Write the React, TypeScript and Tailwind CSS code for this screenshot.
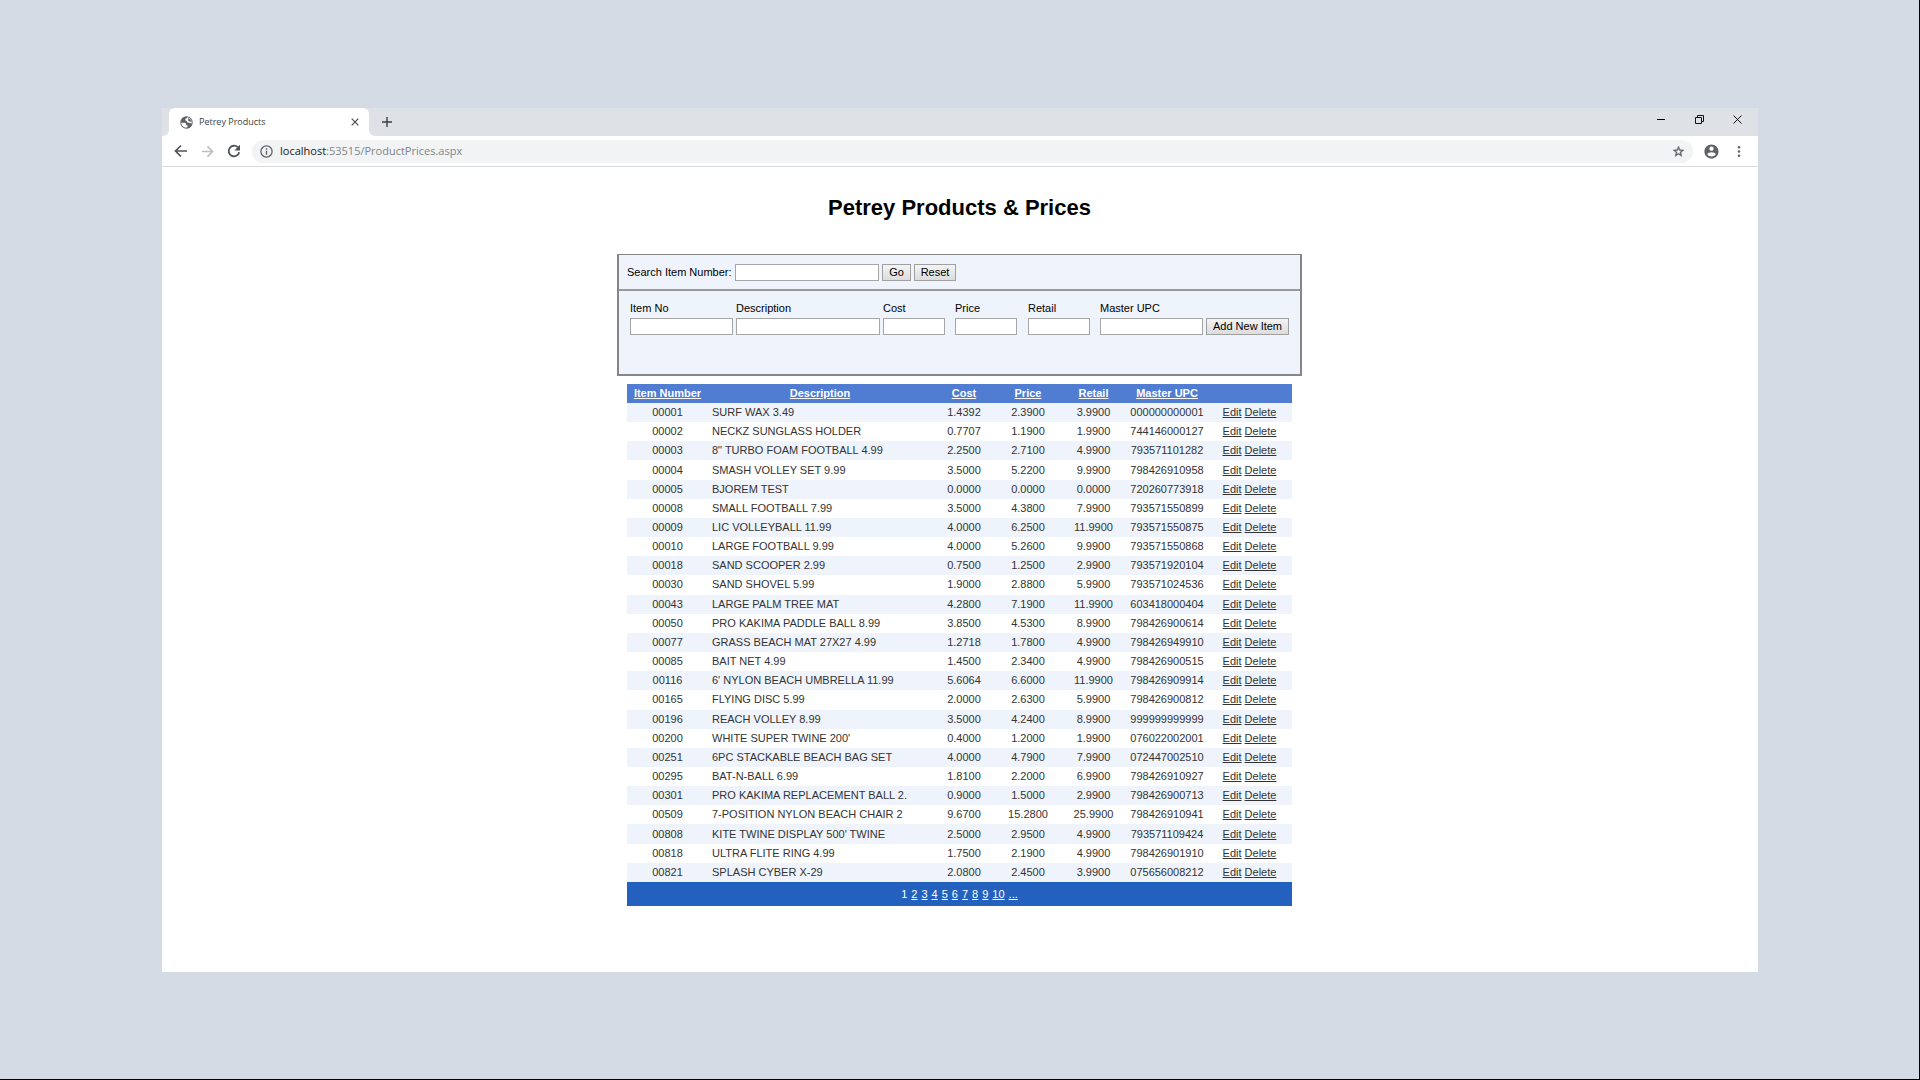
import React from "react";

type Row = [string, string, string, string, string, string];

const rows: Row[] = [
  ["00001", "SURF WAX 3.49", "1.4392", "2.3900", "3.9900", "000000000001"],
  ["00002", "NECKZ SUNGLASS HOLDER", "0.7707", "1.1900", "1.9900", "744146000127"],
  ["00003", '8" TURBO FOAM FOOTBALL 4.99', "2.2500", "2.7100", "4.9900", "793571101282"],
  ["00004", "SMASH VOLLEY SET 9.99", "3.5000", "5.2200", "9.9900", "798426910958"],
  ["00005", "BJOREM TEST", "0.0000", "0.0000", "0.0000", "720260773918"],
  ["00008", "SMALL FOOTBALL 7.99", "3.5000", "4.3800", "7.9900", "793571550899"],
  ["00009", "LIC VOLLEYBALL 11.99", "4.0000", "6.2500", "11.9900", "793571550875"],
  ["00010", "LARGE FOOTBALL 9.99", "4.0000", "5.2600", "9.9900", "793571550868"],
  ["00018", "SAND SCOOPER 2.99", "0.7500", "1.2500", "2.9900", "793571920104"],
  ["00030", "SAND SHOVEL 5.99", "1.9000", "2.8800", "5.9900", "793571024536"],
  ["00043", "LARGE PALM TREE MAT", "4.2800", "7.1900", "11.9900", "603418000404"],
  ["00050", "PRO KAKIMA PADDLE BALL 8.99", "3.8500", "4.5300", "8.9900", "798426900614"],
  ["00077", "GRASS BEACH MAT 27X27 4.99", "1.2718", "1.7800", "4.9900", "798426949910"],
  ["00085", "BAIT NET 4.99", "1.4500", "2.3400", "4.9900", "798426900515"],
  ["00116", "6' NYLON BEACH UMBRELLA 11.99", "5.6064", "6.6000", "11.9900", "798426909914"],
  ["00165", "FLYING DISC 5.99", "2.0000", "2.6300", "5.9900", "798426900812"],
  ["00196", "REACH VOLLEY 8.99", "3.5000", "4.2400", "8.9900", "999999999999"],
  ["00200", "WHITE SUPER TWINE 200'", "0.4000", "1.2000", "1.9900", "076022002001"],
  ["00251", "6PC STACKABLE BEACH BAG SET", "4.0000", "4.7900", "7.9900", "072447002510"],
  ["00295", "BAT-N-BALL 6.99", "1.8100", "2.2000", "6.9900", "798426910927"],
  ["00301", "PRO KAKIMA REPLACEMENT BALL 2.", "0.9000", "1.5000", "2.9900", "798426900713"],
  ["00509", "7-POSITION NYLON BEACH CHAIR 2", "9.6700", "15.2800", "25.9900", "798426910941"],
  ["00808", "KITE TWINE DISPLAY 500' TWINE", "2.5000", "2.9500", "4.9900", "793571109424"],
  ["00818", "ULTRA FLITE RING 4.99", "1.7500", "2.1900", "4.9900", "798426901910"],
  ["00821", "SPLASH CYBER X-29", "2.0800", "2.4500", "3.9900", "075656008212"],
];

const headers = ["Item Number", "Description", "Cost", "Price", "Retail", "Master UPC"];
const pages = ["2", "3", "4", "5", "6", "7", "8", "9", "10", "..."];

const fields = [
  { id: "item-no", label: "Item No", cls: "w-[106px]", input: "w-[103px]" },
  { id: "description", label: "Description", cls: "w-[147px]", input: "w-36" },
  { id: "cost", label: "Cost", cls: "w-[72px]", input: "w-[62px]" },
  { id: "price", label: "Price", cls: "w-[73px]", input: "w-[62px]" },
  { id: "retail", label: "Retail", cls: "w-[72px]", input: "w-[62px]" },
  { id: "master-upc", label: "Master UPC", cls: "w-[106px]", input: "w-[103px]" },
];

const inputBox = "block h-[17px] border border-[#a6a6a6] bg-white px-0.5 text-[11px] outline-none";
const greyButton =
  "h-[17px] border border-[#a0a0a0] bg-gradient-to-b from-[#f4f4f4] to-[#dcdcdc] text-center text-[11px] leading-[15px] text-black";

function TitleBar() {
  return (
    <div className="flex h-7 items-stretch bg-[#dee1e6] pl-[7px]">
      <div className="relative flex w-[200px] items-center rounded-t-md bg-white pl-[11px] pr-2">
        <svg className="absolute -left-1.5 bottom-0" width="6" height="6" viewBox="0 0 6 6" aria-hidden="true">
          <path d="M6 0v6H0a6 6 0 0 0 6-6z" fill="#fff" />
        </svg>
        <svg className="absolute -right-1.5 bottom-0" width="6" height="6" viewBox="0 0 6 6" aria-hidden="true">
          <path d="M0 0v6h6a6 6 0 0 1-6-6z" fill="#fff" />
        </svg>
        <svg width="13" height="13" viewBox="0 0 13 13" aria-hidden="true">
          <circle cx="6.5" cy="6.5" r="6.2" fill="#5f6368" />
          <path d="M1.300 6.800h3.200c1 .1 1.600.7 1.600 1.600v.8h1.500v1.500l-1.400 1c-2.700 0-4.900-2.100-4.900-4.900z" fill="#fff" />
          <path d="M7.300 1.300c-.2 1-.8 1.400-1.900 1.500-.4 1.300.2 2 1.400 2.100.3 1.400 1.100 1.900 2.400 1.900.8.100 1 .8 2.400.6.500-2.900-1.400-5.700-4.300-6.100z" fill="#fff" />
          <path d="M8 2.200c1 .1 2 .8 2.700 1.900l.4 1.700-1.700-.2-1.200-1.300z" fill="#5f6368" />
        </svg>
        <span className="ml-1.5 flex-1 font-['Open_Sans','Noto_Sans',sans-serif] text-[9px] leading-3 text-[#3c4043]">Petrey Products</span>
        <button aria-label="Close tab" className="flex size-3 items-center justify-center">
          <svg width="8" height="8" viewBox="0 0 8 8" stroke="#4a4d51" strokeWidth="1.200">
            <path d="M.7.7l6.600 6.600M7.300.7L.7 7.300" />
          </svg>
        </button>
      </div>
      <button aria-label="New tab" className="ml-3 flex w-3 items-center justify-center">
        <svg width="10" height="10" viewBox="0 0 10 10" stroke="#3c4043" strokeWidth="1.400">
          <path d="M5 0v10M0 5h10" />
        </svg>
      </button>
      <div className="ml-auto flex h-[23px] items-center pr-[2px]">
        <button aria-label="Minimize" className="flex w-[38px] justify-center">
          <svg width="8" height="9" viewBox="0 0 8 9">
            <path d="M0 4h8v1H0z" fill="#000" />
          </svg>
        </button>
        <button aria-label="Restore" className="flex w-[38px] justify-center">
          <svg width="9" height="9" viewBox="0 0 9 9" fill="none" stroke="#111">
            <path d="M.5 2.500h6v6h-6zM2.500 2.500v-2h6v6h-2" />
          </svg>
        </button>
        <button aria-label="Close" className="flex w-[38px] justify-center">
          <svg width="9" height="9" viewBox="0 0 9 9" stroke="#111">
            <path d="M.5.5l8 8M8.500.5l-8 8" />
          </svg>
        </button>
      </div>
    </div>
  );
}

function Toolbar() {
  return (
    <div className="flex h-[31px] items-center border-b border-[#d9dadc] bg-white pl-3 pr-[15px]">
      <button aria-label="Back">
        <svg width="14" height="14" viewBox="0 0 14 14" fill="none" stroke="#505357" strokeWidth="1.700">
          <path d="M13 7H1.600M7 1.500L1.500 7 7 12.500" />
        </svg>
      </button>
      <button aria-label="Forward" className="ml-[13px]">
        <svg width="13" height="13" viewBox="0 0 14 14" fill="none" stroke="#bcbec1" strokeWidth="1.700">
          <path d="M1 7h11.400M7 1.500L12.500 7 7 12.500" />
        </svg>
      </button>
      <button aria-label="Reload" className="ml-[13px]">
        <svg width="14" height="14" viewBox="0 0 14 14" fill="none" stroke="#505357" strokeWidth="1.800">
          <path d="M12.200 8.200A5.300 5.300 0 1 1 10.900 3.400" />
          <path d="M13 .8v5.600H7.400z" fill="#505357" stroke="none" />
        </svg>
      </button>
      <div className="ml-[11px] flex h-[23px] flex-1 items-center rounded-full bg-[#f1f3f4] pl-2 pr-2">
        <svg width="13" height="13" viewBox="0 0 13 13" fill="none" stroke="#5f6368" strokeWidth="1.300" aria-hidden="true">
          <circle cx="6.500" cy="6.500" r="5.600" />
          <path d="M6.500 5.800v3.900M6.500 3.300v1.400" strokeWidth="1.400" />
        </svg>
        <a href="#" className="ml-[7px] flex-1 font-['Open_Sans','Noto_Sans',sans-serif] text-[11px] leading-4 text-[#80868b]">
          <span className="text-[#202124]">localhost</span>:53515/ProductPrices.aspx
        </a>
        <button aria-label="Bookmark this page">
          <svg width="13" height="13" viewBox="0 0 24 24" fill="#5f6368">
            <path d="M22 9.240l-7.190-.62L12 2 9.190 8.630 2 9.240l5.460 4.730L5.820 21 12 17.270 18.180 21l-1.630-7.030L22 9.240zM12 15.400l-3.760 2.270 1-4.280-3.320-2.880 4.380-.38L12 6.100l1.710 4.040 4.380.38-3.320 2.880 1 4.280L12 15.400z" stroke="#5f6368" strokeWidth=".9" />
          </svg>
        </button>
      </div>
      <button aria-label="Account" className="ml-2.5">
        <svg width="17" height="17" viewBox="0 0 24 24" fill="#5f6368">
          <path d="M12 2C6.480 2 2 6.480 2 12s4.480 10 10 10 10-4.480 10-10S17.520 2 12 2zm0 3c1.660 0 3 1.340 3 3s-1.340 3-3 3-3-1.340-3-3 1.340-3 3-3zm0 14.200c-2.500 0-4.710-1.280-6-3.220.03-1.990 4-3.080 6-3.080 1.990 0 5.970 1.090 6 3.080-1.290 1.940-3.500 3.220-6 3.220z" />
        </svg>
      </button>
      <button aria-label="Menu" className="ml-[15px]">
        <svg width="8" height="11" viewBox="0 0 8 11" fill="#5f6368">
          <circle cx="4" cy="1.300" r="1.250" />
          <circle cx="4" cy="5.500" r="1.250" />
          <circle cx="4" cy="9.700" r="1.250" />
        </svg>
      </button>
    </div>
  );
}

function EntryPanel() {
  return (
    <div className="mx-auto mt-[33px] w-[685px] border-2 border-t border-[#868686] bg-[#eff3fb] text-[11px] leading-[13px] text-black">
      <form className="flex h-[36px] items-center border-b-2 border-[#9a9a9a] pl-2" onSubmit={(e) => e.preventDefault()}>
        <label htmlFor="search" className="w-[108px]">
          Search Item Number:
        </label>
        <input id="search" type="text" className={inputBox + " w-36"} />
        <button className={greyButton + " ml-[3px] w-[29px]"}>Go</button>
        <button type="reset" className={greyButton + " ml-[3px] w-[42px]"}>
          Reset
        </button>
      </form>
      <form className="flex h-[83px] items-start pl-[11px] pt-[11px]" onSubmit={(e) => e.preventDefault()}>
        {fields.map((f) => (
          <div key={f.id} className={f.cls}>
            <label htmlFor={f.id} className="block h-4">
              {f.label}
            </label>
            <input id={f.id} type="text" className={inputBox + " " + f.input} />
          </div>
        ))}
        <button className={greyButton + " mt-4 w-[83px]"}>Add New Item</button>
      </form>
    </div>
  );
}

function ProductTable() {
  return (
    <table className="mx-auto mt-2 h-[522px] w-[665px] table-fixed border-collapse text-center text-[11px] leading-[13px] text-[#333333]">
      <colgroup>
        <col className="w-[81px]" />
        <col className="w-56" />
        <col className="w-16" />
        <col className="w-16" />
        <col className="w-[67px]" />
        <col className="w-20" />
        <col className="w-[85px]" />
      </colgroup>
      <thead>
        <tr className="h-[19px] bg-[#507cd1] text-white">
          {headers.map((h) => (
            <th key={h} scope="col" className="p-0 font-bold">
              <a href="#" className="whitespace-nowrap underline">
                {h}
              </a>
            </th>
          ))}
          <td className="p-0" />
        </tr>
      </thead>
      <tbody>
        {rows.map((r) => (
          <tr key={r[0]} className="odd:bg-[#eff3fb] even:bg-white">
            <td className="p-0">{r[0]}</td>
            <td className="whitespace-nowrap p-0 pl-1 text-left">{r[1]}</td>
            <td className="p-0">{r[2]}</td>
            <td className="p-0">{r[3]}</td>
            <td className="p-0">{r[4]}</td>
            <td className="p-0">{r[5]}</td>
            <td className="p-0">
              <a href="#" className="underline">
                Edit
              </a>{" "}
              <a href="#" className="underline">
                Delete
              </a>
            </td>
          </tr>
        ))}
      </tbody>
      <tfoot>
        <tr className="h-6 bg-[#2461bf] text-white">
          <td colSpan={7} className="p-0">
            <nav aria-label="Pages" className="flex justify-center gap-1">
              <span>1</span>
              {pages.map((p) => (
                <a key={p} href="#" className="underline">
                  {p}
                </a>
              ))}
            </nav>
          </td>
        </tr>
      </tfoot>
    </table>
  );
}

export default function App() {
  return (
    <div className="flex min-h-screen flex-col border-b border-r border-black bg-[#d5dbe5] pb-[107px] pl-[162px] pr-[161px] pt-[108px] font-['Liberation_Sans',Arial,sans-serif]">
      <div className="flex flex-1 flex-col bg-white">
        <TitleBar />
        <Toolbar />
        <main className="flex-1 pr-px">
          <h1 className="mt-7 text-center text-[22px] leading-[26px] font-bold text-black">Petrey Products &amp; Prices</h1>
          <EntryPanel />
          <ProductTable />
        </main>
      </div>
    </div>
  );
}
